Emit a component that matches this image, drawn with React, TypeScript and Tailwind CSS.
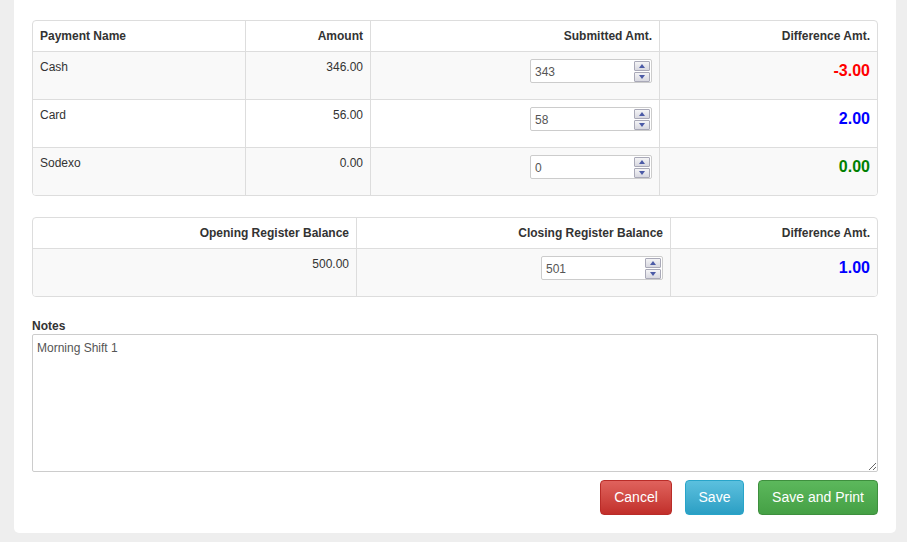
import React from "react";

const font = { fontFamily: '"Liberation Sans", Arial, Helvetica, sans-serif' };

type Row = { name: string; amount: string; submitted: string; diff: string; color: string };

const rows: Row[] = [
  { name: "Cash", amount: "346.00", submitted: "343", diff: "-3.00", color: "text-[#ff0000]" },
  { name: "Card", amount: "56.00", submitted: "58", diff: "2.00", color: "text-[#0000ff]" },
  { name: "Sodexo", amount: "0.00", submitted: "0", diff: "0.00", color: "text-[#008000]" },
];

function Spinner() {
  return (
    <div className="mr-[1px] flex h-[21px] w-[16px] flex-col gap-px">
      <div className="flex flex-1 items-center justify-center rounded-[1px] border border-[#a9a9b8] bg-gradient-to-b from-[#f4f4f6] to-[#d8d8e0]">
        <svg width="6" height="4" viewBox="0 0 6 4">
          <path d="M0 4 L3 0 L6 4 Z" fill="#4b5aa6" />
        </svg>
      </div>
      <div className="flex flex-1 items-center justify-center rounded-[1px] border border-[#a9a9b8] bg-gradient-to-b from-[#f4f4f6] to-[#d8d8e0]">
        <svg width="6" height="4" viewBox="0 0 6 4">
          <path d="M0 0 L6 0 L3 4 Z" fill="#4b5aa6" />
        </svg>
      </div>
    </div>
  );
}

function NumberInput({ value }: { value: string }) {
  return (
    <div className="flex h-[24px] w-[122px] items-center justify-between rounded-[2px] border border-[#cccccc] bg-white pl-[4px]">
      <span className="pt-[1px] text-[12px] text-[#555555]">{value}</span>
      <Spinner />
    </div>
  );
}

export default function App() {
  return (
    <div className="min-h-[542px] bg-[#eeeeee] pl-[14px] pr-[11px] pb-[10px]" style={font}>
      <div className="rounded-b-[5px] bg-white px-[18px] pt-[20px] pb-[18px]">
        {/* payments */}
        <div className="overflow-hidden rounded-[4px] border border-[#dddddd] text-[12px] text-[#333333]">
          <div className="grid grid-cols-[212px_125px_289px_218px] border-b border-[#dddddd] font-bold">
            <div className="flex h-[30px] items-center px-[7px]">Payment Name</div>
            <div className="flex h-[30px] items-center justify-end border-l border-[#dddddd] px-[7px]">Amount</div>
            <div className="flex h-[30px] items-center justify-end border-l border-[#dddddd] px-[7px]">Submitted Amt.</div>
            <div className="flex h-[30px] items-center justify-end border-l border-[#dddddd] px-[7px]">Difference Amt.</div>
          </div>
          {rows.map((r, i) => (
            <div
              key={r.name}
              className={`grid grid-cols-[212px_125px_289px_218px] ${i < rows.length - 1 ? "border-b border-[#dddddd]" : ""} ${i % 2 === 0 ? "bg-[#f9f9f9]" : "bg-white"}`}
            >
              <div className="h-[47px] px-[7px] pt-[7px] leading-[17px]">{r.name}</div>
              <div className="h-[47px] border-l border-[#dddddd] px-[7px] pt-[7px] text-right leading-[17px]">{r.amount}</div>
              <div className="flex h-[47px] justify-end border-l border-[#dddddd] pr-[7px] pt-[7px]">
                <NumberInput value={r.submitted} />
              </div>
              <div className={`h-[47px] border-l border-[#dddddd] px-[7px] pt-[9px] text-right text-[16px] font-bold leading-[20px] ${r.color}`}>
                {r.diff}
              </div>
            </div>
          ))}
        </div>

        {/* register balance */}
        <div className="mt-[21px] overflow-hidden rounded-[4px] border border-[#dddddd] text-[12px] text-[#333333]">
          <div className="grid grid-cols-[323px_314px_207px] border-b border-[#dddddd] font-bold">
            <div className="flex h-[30px] items-center justify-end px-[7px]">Opening Register Balance</div>
            <div className="flex h-[30px] items-center justify-end border-l border-[#dddddd] px-[7px]">Closing Register Balance</div>
            <div className="flex h-[30px] items-center justify-end border-l border-[#dddddd] px-[7px]">Difference Amt.</div>
          </div>
          <div className="grid grid-cols-[323px_314px_207px] bg-[#f9f9f9]">
            <div className="h-[47px] px-[7px] pt-[7px] text-right leading-[17px]">500.00</div>
            <div className="flex h-[47px] justify-end border-l border-[#dddddd] pr-[7px] pt-[7px]">
              <NumberInput value="501" />
            </div>
            <div className="h-[47px] border-l border-[#dddddd] px-[7px] pt-[9px] text-right text-[16px] font-bold leading-[20px] text-[#0000ff]">
              1.00
            </div>
          </div>
        </div>

        {/* notes */}
        <div className="mt-[22px] text-[12px] font-bold leading-[15px] text-[#333333]">Notes</div>
        <textarea
          defaultValue="Morning Shift 1"
          className="block h-[138px] w-full resize-y rounded-[2px] border border-[#cccccc] px-[4px] py-[5px] text-[12px] leading-[16px] text-[#555555] outline-none"
          style={font}
        />

        <div className="mt-[8px] flex justify-end gap-[13px]">
          <button className="h-[35px] w-[72px] rounded-[4px] border border-[#b92c28] bg-gradient-to-b from-[#e0625d] to-[#c12e2a] text-[14px] text-white">
            Cancel
          </button>
          <button className="h-[35px] w-[59px] rounded-[4px] border border-[#28a4c9] bg-gradient-to-b from-[#5bc0de] to-[#2a9fc4] text-[14px] text-white">
            Save
          </button>
          <button className="ml-[1px] h-[35px] w-[120px] rounded-[4px] border border-[#3e8f3e] bg-gradient-to-b from-[#5cb85c] to-[#45a045] text-[14px] text-white">
            Save and Print
          </button>
        </div>
      </div>
    </div>
  );
}
